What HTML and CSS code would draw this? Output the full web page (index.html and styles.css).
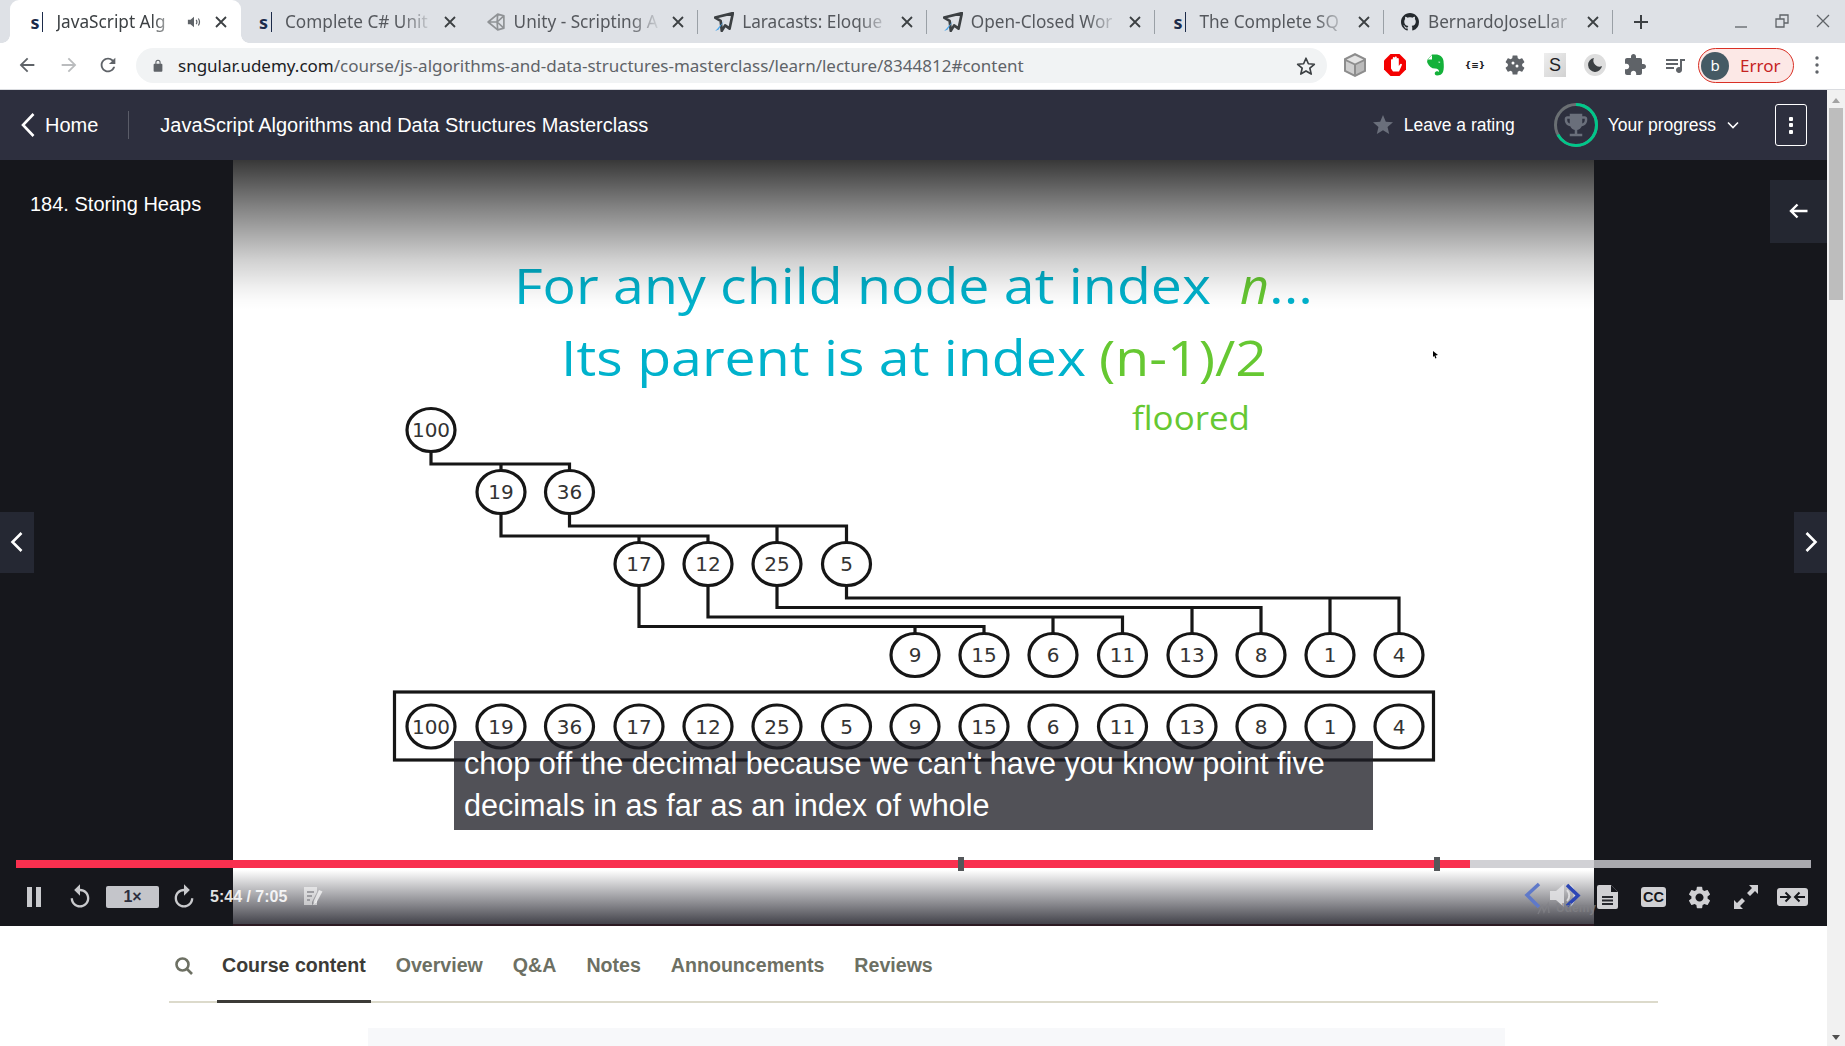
FILE: index.html
```html
<!DOCTYPE html>
<html lang="en">
<head>
<meta charset="utf-8">
<title>JavaScript Algorithms and Data Structures Masterclass</title>
<link rel="stylesheet" href="styles.css">
</head>
<body>
<div class="chrome">
  <div class="tabstrip">
    <div class="tab active">
      <span class="fav-s">s</span>
      <span class="tab-title">JavaScript Alg</span>
      <svg class="tab-audio" viewBox="0 0 16 16"><path d="M1 5.5h3L8 2v12L4 10.5H1z"/><path class="ln" d="M10.5 5.5c1 1.5 1 3.5 0 5M13 4c1.6 2.500 1.6 5.500 0 8"/></svg>
      <svg class="tab-x" viewBox="0 0 16 16"><path d="M3 3l10 10M13 3L3 13"/></svg>
    </div>
    <div class="tab">
      <span class="fav-s">s</span>
      <span class="tab-title">Complete C# Unit</span>
      <svg class="tab-x" viewBox="0 0 16 16"><path d="M3 3l10 10M13 3L3 13"/></svg>
    </div>
    <div class="tab sep">
      <svg class="fav" viewBox="0 0 16 16"><path class="unity" d="M9.5 1L15 2.5V13.500L9.500 15 1 8zM1 8h8M9.500 1L9 8l.5 7M9 8l6-5.500M9 8l6 5.500"/></svg>
      <span class="tab-title">Unity - Scripting A</span>
      <svg class="tab-x" viewBox="0 0 16 16"><path d="M3 3l10 10M13 3L3 13"/></svg>
    </div>
    <div class="tab sep">
      <svg class="fav fav-plane" viewBox="0 0 18 18"><path class="plane" d="M17 1L1 5l5 3 1 9 3-5 4 3z"/><path class="plane-blue" d="M9 8L3 15l-2 2 3-1z"/></svg>
      <span class="tab-title">Laracasts: Eloque</span>
      <svg class="tab-x" viewBox="0 0 16 16"><path d="M3 3l10 10M13 3L3 13"/></svg>
    </div>
    <div class="tab sep">
      <svg class="fav fav-plane" viewBox="0 0 18 18"><path class="plane" d="M17 1L1 5l5 3 1 9 3-5 4 3z"/><path class="plane-blue" d="M9 8L3 15l-2 2 3-1z"/></svg>
      <span class="tab-title">Open-Closed Wor</span>
      <svg class="tab-x" viewBox="0 0 16 16"><path d="M3 3l10 10M13 3L3 13"/></svg>
    </div>
    <div class="tab sep">
      <span class="fav-s">s</span>
      <span class="tab-title">The Complete SQ</span>
      <svg class="tab-x" viewBox="0 0 16 16"><path d="M3 3l10 10M13 3L3 13"/></svg>
    </div>
    <div class="tab sep">
      <svg class="fav gh" viewBox="0 0 16 16"><path d="M8 0C3.58 0 0 3.58 0 8c0 3.54 2.29 6.53 5.47 7.59.4.07.55-.17.55-.38 0-.19-.01-.82-.01-1.49-2.01.37-2.53-.49-2.69-.94-.09-.23-.48-.94-.82-1.13-.28-.15-.68-.52-.01-.53.63-.01 1.08.58 1.23.82.72 1.21 1.87.87 2.33.66.07-.52.28-.87.51-1.07-1.78-.2-3.64-.89-3.64-3.95 0-.87.31-1.59.82-2.15-.08-.2-.36-1.02.08-2.12 0 0 .67-.21 2.2.82.64-.18 1.32-.27 2-.27.68 0 1.36.09 2 .27 1.53-1.04 2.2-.82 2.2-.82.44 1.1.16 1.92.08 2.12.51.56.82 1.27.82 2.15 0 3.07-1.87 3.75-3.65 3.95.29.25.54.73.54 1.48 0 1.07-.01 1.93-.01 2.2 0 .21.15.46.55.38A8.013 8.013 0 0 0 16 8c0-4.42-3.58-8-8-8z"/></svg>
      <span class="tab-title">BernardoJoseLlar</span>
      <svg class="tab-x" viewBox="0 0 16 16"><path d="M3 3l10 10M13 3L3 13"/></svg>
    </div>
    <svg class="new-tab" viewBox="0 0 16 16"><path d="M8 1v14M1 8h14"/></svg>
    <div class="win-controls">
      <svg viewBox="0 0 16 16"><path d="M2 14h12"/></svg>
      <svg viewBox="0 0 16 16"><path d="M2 6h8v8H2zM6 6V2h8v8h-4"/></svg>
      <svg viewBox="0 0 16 16"><path d="M2 2l12 12M14 2L2 14"/></svg>
    </div>
  </div>
  <div class="toolbar">
    <svg class="nav-ic" viewBox="0 0 24 24"><path d="M20 11H7.83l5.59-5.59L12 4l-8 8 8 8 1.41-1.41L7.83 13H20v-2z"/></svg>
    <svg class="nav-ic dim flip" viewBox="0 0 24 24"><path d="M20 11H7.83l5.59-5.59L12 4l-8 8 8 8 1.41-1.41L7.83 13H20v-2z"/></svg>
    <svg class="nav-ic" viewBox="0 0 24 24"><path d="M17.65 6.35A7.958 7.958 0 0 0 12 4c-4.42 0-7.99 3.58-7.99 8s3.57 8 7.99 8c3.73 0 6.84-2.55 7.73-6h-2.08A5.99 5.99 0 0 1 12 18c-3.31 0-6-2.69-6-6s2.69-6 6-6c1.66 0 3.14.69 4.22 1.78L13 11h7V4l-2.35 2.35z"/></svg>
    <div class="omnibox">
      <svg class="lock" viewBox="0 0 16 16"><path d="M12 6h-1V4.5a3 3 0 0 0-6 0V6H4a1 1 0 0 0-1 1v7a1 1 0 0 0 1 1h8a1 1 0 0 0 1-1V7a1 1 0 0 0-1-1zM6.2 6V4.5a1.8 1.8 0 0 1 3.6 0V6z"/></svg>
      <span class="url"><b>sngular.udemy.com</b>/course/js-algorithms-and-data-structures-masterclass/learn/lecture/8344812#content</span>
      <svg class="omni-star" viewBox="0 0 24 24"><path d="M12 3.5l2.6 6 6.5.6-4.9 4.3 1.5 6.4-5.7-3.4-5.7 3.4 1.5-6.4-4.9-4.3 6.5-.6z"/></svg>
    </div>
    <div class="ext-row">
      <svg class="ext" viewBox="0 0 24 24"><path fill="#8d8d8d" d="M12 0l11 5.500v13L12 24 1 18.500v-13z"/><path fill="#e4e4e4" d="M12 2.600l8.400 3.900-8.400 3.900-8.400-3.900z"/><path fill="#cfcfcf" d="M3 8.200l8 3.700v9.300l-8-4z"/><path fill="#bbbbbb" d="M21 8.200l-8 3.700v9.300l8-4z"/></svg>
      <svg class="ext" viewBox="0 0 24 24"><path fill="#f40000" d="M7.5 1h9L23 7.5v9L16.5 23h-9L1 16.500v-9z"/><path fill="#fff" d="M8 11V7a1 1 0 0 1 1.800-.5V5a1 1 0 0 1 2 0V4.500a1 1 0 0 1 2 0V6a1 1 0 0 1 2 0v7l1.500-2a1 1 0 0 1 1.500 1.300L16 18.500H10L8 15.500z"/></svg>
      <svg class="ext" viewBox="0 0 24 24"><path fill="#14b13a" d="M4.500 6.500L9 1.500h3.500c4.500 0 7.500 2.500 8 6.500.5 5 .5 8-.5 11-.8 2.500-3.500 3.500-6 3.500-2.500 0-3-3-1-4 1-.4 2.500 0 3 .5 0-2-1-3.500-4-3.500-3.500 0-6-2-7.500-5.500-.5-1.200-.5-2.100 0-3z"/><path fill="#fff" d="M9 2v4.500H4.800z"/><path fill="#fff" d="M15.500 8.500l2 .5-1.700.9z"/></svg>
      <span class="ext ext-braces">{≡}</span>
      <svg class="ext" viewBox="0 0 24 24"><path fill="#5f6368" d="M19.14 12.94c.04-.3.06-.61.06-.94 0-.32-.02-.64-.07-.94l2.03-1.58a.49.49 0 0 0 .12-.61l-1.92-3.32a.488.488 0 0 0-.59-.22l-2.39.96c-.5-.38-1.03-.7-1.62-.94l-.36-2.54a.484.484 0 0 0-.48-.41h-3.84c-.24 0-.43.17-.47.41l-.36 2.54c-.59.24-1.13.57-1.62.94l-2.39-.96c-.22-.08-.47 0-.59.22L2.74 8.87c-.12.21-.08.47.12.61l2.03 1.58c-.05.3-.09.63-.09.94s.02.64.07.94l-2.03 1.58a.49.49 0 0 0-.12.61l1.92 3.32c.12.22.37.29.59.22l2.39-.96c.5.38 1.03.7 1.62.94l.36 2.54c.05.24.24.41.48.41h3.84c.24 0 .44-.17.47-.41l.36-2.54c.59-.24 1.13-.56 1.62-.94l2.39.96c.22.08.47 0 .59-.22l1.92-3.32c.12-.22.07-.47-.12-.61l-2.01-1.58z"/><circle cx="10" cy="10" r="1.5" fill="#fff"/><circle cx="14" cy="13" r="1.5" fill="#fff"/></svg>
      <span class="ext ext-s">S</span>
      <svg class="ext" viewBox="0 0 24 24"><circle cx="12" cy="12" r="11" fill="#dedede"/><path fill="#3c4043" d="M11 5a7 7 0 1 0 8 8 6 6 0 0 1-8-8z"/></svg>
      <svg class="ext" viewBox="0 0 24 24"><path fill="#5f6368" d="M20.5 11H19V7c0-1.1-.9-2-2-2h-4V3.5C13 2.12 11.88 1 10.5 1S8 2.12 8 3.5V5H4c-1.1 0-1.99.9-1.99 2v3.8H3.5c1.49 0 2.7 1.21 2.7 2.7s-1.21 2.7-2.7 2.7H2V20c0 1.1.9 2 2 2h3.8v-1.5c0-1.49 1.21-2.7 2.7-2.7 1.49 0 2.7 1.21 2.7 2.7V22H17c1.1 0 2-.9 2-2v-4h1.5c1.38 0 2.5-1.12 2.5-2.5S21.88 11 20.5 11z"/></svg>
      <svg class="ext" viewBox="0 0 24 24"><path fill="#5f6368" d="M15 6H3v2h12V6zm0 4H3v2h12v-2zM3 16h8v-2H3v2zM17 6v8.18c-.31-.11-.65-.18-1-.18-1.66 0-3 1.34-3 3s1.34 3 3 3 3-1.34 3-3V8h3V6h-5z"/></svg>
    </div>
    <div class="profile-pill"><span class="avatar">b</span><span class="pill-text">Error</span></div>
    <svg class="menu-dots" viewBox="0 0 4 18"><circle cx="2" cy="2" r="1.7"/><circle cx="2" cy="9" r="1.7"/><circle cx="2" cy="16" r="1.7"/></svg>
  </div>
</div>

<div class="page">
  <div class="content">
    <header class="course-header">
      <svg class="home-chev" viewBox="0 0 16 26"><path d="M13.5 2L3 13l10.5 11"/></svg>
      <span class="home">Home</span>
      <span class="divider"></span>
      <span class="course-title">JavaScript Algorithms and Data Structures Masterclass</span>
      <div class="header-right">
        <svg class="rate-star" viewBox="0 0 24 24"><path d="M12 17.27L18.18 21l-1.64-7.03L22 9.24l-7.19-.61L12 2 9.19 8.63 2 9.24l5.46 4.73L5.82 21z"/></svg>
        <span class="rate-text">Leave a rating</span>
        <svg class="ring" viewBox="0 0 44 44">
          <circle class="ring-base" cx="22" cy="22" r="20.5"/>
          <circle class="ring-fill" cx="22" cy="22" r="20.5" transform="rotate(-90 22 22)"/>
          <path class="trophy" transform="translate(7 7) scale(1.25)" d="M19 5h-2V3H7v2H5c-1.1 0-2 .9-2 2v1c0 2.55 1.92 4.63 4.39 4.94.63 1.5 1.98 2.63 3.61 2.96V19H7v2h10v-2h-4v-3.1c1.63-.33 2.98-1.46 3.61-2.96C19.08 12.63 21 10.55 21 8V7c0-1.1-.9-2-2-2zM5 8V7h2v3.82C5.84 10.4 5 9.3 5 8zm14 0c0 1.3-.84 2.4-2 2.82V7h2v1z"/>
        </svg>
        <span class="progress-text">Your progress</span>
        <svg class="prog-chev" viewBox="0 0 12 8"><path d="M1 1.5l5 5 5-5"/></svg>
        <div class="kebab"><i></i><i></i><i></i></div>
      </div>
    </header>

    <section class="player">
      <aside class="side side-left"><div class="lecture-name">184. Storing Heaps</div></aside>
      <div class="slide">
        <svg class="slide-art" viewBox="233 160 1361 766">
          <text class="t-blue t-big" x="514" y="304" textLength="697" lengthAdjust="spacingAndGlyphs">For any child node at index</text>
          <text class="t-green t-big t-it" x="1240" y="304" textLength="29" lengthAdjust="spacingAndGlyphs">n</text>
          <text class="t-blue t-big" x="1269" y="304" textLength="44" lengthAdjust="spacingAndGlyphs">...</text>
          <text class="t-blue t-big" x="561" y="376" textLength="525" lengthAdjust="spacingAndGlyphs">Its parent is at index</text>
          <text class="t-green t-big" x="1099" y="376" textLength="168" lengthAdjust="spacingAndGlyphs">(n-1)/2</text>
          <text class="t-green t-small" x="1132" y="430" textLength="118" lengthAdjust="spacingAndGlyphs">floored</text>

          <path class="wire" d="M431 450V464H569.5V472M501 464V472"/>
          <path class="wire" d="M569.5 512V526H846.5V544M777 526V544"/>
          <path class="wire" d="M501 512V536H708V544M639 536V544"/>
          <path class="wire" d="M846.5 584V598H1399V635M1330 598V635"/>
          <path class="wire" d="M777 584V607.5H1261V635M1192 607.5V635"/>
          <path class="wire" d="M708 584V617H1122.5V635M1053 617V635"/>
          <path class="wire" d="M639 584V626.5H984V635M915 626.5V635"/>
          <rect class="wire" x="394.5" y="692" width="1039" height="68"/>

          <g class="node" transform="translate(431 430)"><ellipse rx="24" ry="21.5"/><text>100</text></g>
          <g class="node" transform="translate(501 492)"><ellipse rx="24" ry="21.5"/><text>19</text></g>
          <g class="node" transform="translate(569.5 492)"><ellipse rx="24" ry="21.5"/><text>36</text></g>
          <g class="node" transform="translate(639 564)"><ellipse rx="24" ry="21.5"/><text>17</text></g>
          <g class="node" transform="translate(708 564)"><ellipse rx="24" ry="21.5"/><text>12</text></g>
          <g class="node" transform="translate(777 564)"><ellipse rx="24" ry="21.5"/><text>25</text></g>
          <g class="node" transform="translate(846.5 564)"><ellipse rx="24" ry="21.5"/><text>5</text></g>
          <g class="node" transform="translate(915 655)"><ellipse rx="24" ry="21.5"/><text>9</text></g>
          <g class="node" transform="translate(984 655)"><ellipse rx="24" ry="21.5"/><text>15</text></g>
          <g class="node" transform="translate(1053 655)"><ellipse rx="24" ry="21.5"/><text>6</text></g>
          <g class="node" transform="translate(1122.5 655)"><ellipse rx="24" ry="21.5"/><text>11</text></g>
          <g class="node" transform="translate(1192 655)"><ellipse rx="24" ry="21.5"/><text>13</text></g>
          <g class="node" transform="translate(1261 655)"><ellipse rx="24" ry="21.5"/><text>8</text></g>
          <g class="node" transform="translate(1330 655)"><ellipse rx="24" ry="21.5"/><text>1</text></g>
          <g class="node" transform="translate(1399 655)"><ellipse rx="24" ry="21.5"/><text>4</text></g>

          <g class="node" transform="translate(431 726.5)"><ellipse rx="24" ry="21.5"/><text>100</text></g>
          <g class="node" transform="translate(501 726.5)"><ellipse rx="24" ry="21.5"/><text>19</text></g>
          <g class="node" transform="translate(569.5 726.5)"><ellipse rx="24" ry="21.5"/><text>36</text></g>
          <g class="node" transform="translate(639 726.5)"><ellipse rx="24" ry="21.5"/><text>17</text></g>
          <g class="node" transform="translate(708 726.5)"><ellipse rx="24" ry="21.5"/><text>12</text></g>
          <g class="node" transform="translate(777 726.5)"><ellipse rx="24" ry="21.5"/><text>25</text></g>
          <g class="node" transform="translate(846.5 726.5)"><ellipse rx="24" ry="21.5"/><text>5</text></g>
          <g class="node" transform="translate(915 726.5)"><ellipse rx="24" ry="21.5"/><text>9</text></g>
          <g class="node" transform="translate(984 726.5)"><ellipse rx="24" ry="21.5"/><text>15</text></g>
          <g class="node" transform="translate(1053 726.5)"><ellipse rx="24" ry="21.5"/><text>6</text></g>
          <g class="node" transform="translate(1122.5 726.5)"><ellipse rx="24" ry="21.5"/><text>11</text></g>
          <g class="node" transform="translate(1192 726.5)"><ellipse rx="24" ry="21.5"/><text>13</text></g>
          <g class="node" transform="translate(1261 726.5)"><ellipse rx="24" ry="21.5"/><text>8</text></g>
          <g class="node" transform="translate(1330 726.5)"><ellipse rx="24" ry="21.5"/><text>1</text></g>
          <g class="node" transform="translate(1399 726.5)"><ellipse rx="24" ry="21.5"/><text>4</text></g>

          <path class="cursor" d="M1433 351l5 4-2.5.4 1 2.6-1.2.4-1-2.6-1.3 1.2z"/>
        </svg>
      </div>
      <aside class="side side-right"></aside>

      <div class="caption">chop off the decimal because we can't have you know point five<br>decimals in as far as an index of whole</div>

      <button class="panel-btn" aria-label="Collapse sidebar"><svg viewBox="0 0 20 16"><path d="M18.5 8H2M8.5 1.5L2 8l6.5 6.5"/></svg></button>
      <button class="nav-arrow nav-prev" aria-label="Previous"><svg viewBox="0 0 14 22"><path d="M11.5 2L2.5 11l9 9"/></svg></button>
      <button class="nav-arrow nav-next" aria-label="Next"><svg viewBox="0 0 14 22"><path d="M2.5 2l9 9-9 9"/></svg></button>

      <div class="controls">
        <div class="progress">
          <div class="progress-fill"></div>
          <span class="mark mark-a"></span>
          <span class="mark mark-b"></span>
        </div>
        <div class="ctrl-row">
          <div class="ctrl-left">
            <svg class="ci ci-pause" viewBox="0 0 14 20"><path d="M0 0h5v20H0zM9 0h5v20H9z"/></svg>
            <svg class="ci ci-replay" viewBox="0 0 24 24"><path d="M12 5V1L7 6l5 5V7c3.31 0 6 2.69 6 6s-2.69 6-6 6-6-2.69-6-6H4c0 4.42 3.58 8 8 8s8-3.58 8-8-3.58-8-8-8z"/></svg>
            <span class="speed">1×</span>
            <svg class="ci ci-replay flip" viewBox="0 0 24 24"><path d="M12 5V1L7 6l5 5V7c3.31 0 6 2.69 6 6s-2.69 6-6 6-6-2.69-6-6H4c0 4.42 3.58 8 8 8s8-3.58 8-8-3.58-8-8-8z"/></svg>
            <span class="time">5:44 / 7:05</span>
            <svg class="ci-note" viewBox="0 0 24 24"><path d="M3 2h13v5l-5 10v3l3-2 2-4v6H3z"/><path class="note-pen" d="M18 5l3.5 1.5-6 11-3 2 .2-3.5z"/><path class="note-lines" d="M6 7h7M6 11h5M6 15h3"/></svg>
          </div>
          <div class="ctrl-right">
            <svg class="vol" viewBox="0 0 66 32">
              <path class="vol-chev-a" d="M15 3L3 14l12 12"/>
              <path class="vol-speaker" d="M26 10h6l8-7v23l-8-7h-6z"/>
              <path class="vol-wave" d="M43 9c3 3 3 8 0 11M46 4c6 6 6 15 0 21"/>
              <path class="vol-chev-b" d="M43 4l11 10.5L43 25"/>
              <text class="watermark" x="32" y="31">Udemy</text>
              <path class="vol-mark" d="M14 33l4-8 2 6 4-8 1 9"/>
            </svg>
            <svg class="ci-doc" viewBox="0 0 21 24"><path class="doc-body" d="M2 0h12l7 7v15a2 2 0 0 1-2 2H2a2 2 0 0 1-2-2V2a2 2 0 0 1 2-2z"/><path class="doc-fold" d="M14 0v7h7"/><path class="doc-lines" d="M5 12h11M5 15.5h11M5 19h11"/></svg>
            <span class="cc">CC</span>
            <svg class="ci-gear" viewBox="0 0 24 24"><path d="M19.14 12.94c.04-.3.06-.61.06-.94 0-.32-.02-.64-.07-.94l2.03-1.58a.49.49 0 0 0 .12-.61l-1.92-3.32a.488.488 0 0 0-.59-.22l-2.39.96c-.5-.38-1.03-.7-1.62-.94l-.36-2.54a.484.484 0 0 0-.48-.41h-3.84c-.24 0-.43.17-.47.41l-.36 2.54c-.59.24-1.13.57-1.62.94l-2.39-.96c-.22-.08-.47 0-.59.22L2.74 8.87c-.12.21-.08.47.12.61l2.03 1.58c-.05.3-.09.63-.09.94s.02.64.07.94l-2.03 1.58a.49.49 0 0 0-.12.61l1.92 3.32c.12.22.37.29.59.22l2.39-.96c.5.38 1.03.7 1.62.94l.36 2.54c.05.24.24.41.48.41h3.84c.24 0 .44-.17.47-.41l.36-2.54c.59-.24 1.13-.56 1.62-.94l2.39.96c.22.08.47 0 .59-.22l1.92-3.32c.12-.22.07-.47-.12-.61l-2.01-1.58zM12 15.6c-1.98 0-3.6-1.62-3.6-3.6s1.62-3.6 3.6-3.6 3.6 1.62 3.6 3.6-1.62 3.6-3.6 3.6z"/></svg>
            <svg class="ci-expand" viewBox="0 0 26 26"><path d="M25 1v9l-3-3-5 5-3-3 5-5-3-3zM1 25v-9l3 3 5-5 3 3-5 5 3 3z"/></svg>
            <svg class="ci-theater" viewBox="0 0 31 18"><rect class="th-body" width="31" height="18" rx="3"/><path class="th-arrows" d="M3 9h9M8.5 4.5L13 9l-4.5 4.5M28 9h-9M22.5 4.5L18 9l4.5 4.5"/></svg>
          </div>
        </div>
      </div>
    </section>

    <nav class="course-nav">
      <svg class="nav-search" viewBox="0 0 20 20"><circle cx="8.5" cy="8.5" r="6"/><path d="M13 13l5 5"/></svg>
      <a class="nav-item current">Course content</a>
      <a class="nav-item">Overview</a>
      <a class="nav-item">Q&amp;A</a>
      <a class="nav-item">Notes</a>
      <a class="nav-item">Announcements</a>
      <a class="nav-item">Reviews</a>
    </nav>
    <div class="below"></div>
  </div>
  <div class="scrollbar">
    <span class="sb-up"></span>
    <span class="sb-thumb"></span>
    <span class="sb-down"></span>
  </div>
</div>
</body>
</html>
```

FILE: styles.css
```css
* { box-sizing: border-box; }
html, body { margin: 0; padding: 0; }
body {
  width: 1845px;
  height: 1046px;
  overflow: hidden;
  background: #fff;
  font-family: "Liberation Sans", Arial, sans-serif;
}
svg { display: block; flex: none; }
.flip { transform: scaleX(-1); }

/* browser chrome */
.chrome { height: 90px; }
.tabstrip {
  height: 43px;
  background: #dee1e6;
  display: flex;
  padding-left: 12.4px;
  font-family: "Noto Sans", sans-serif;
}
.tab {
  position: relative;
  flex: 0 0 228.6px;
  min-width: 0;
  height: 43px;
  display: flex;
  align-items: center;
  padding: 0 12px 0 18px;
  color: #55585d;
  font-size: 17.2px;
}
.tab.sep::after {
  content: "";
  position: absolute;
  right: 0;
  top: 10px;
  width: 1px;
  height: 24px;
  background: #9aa0a6;
}
.tab.active {
  background: #fff;
  border-radius: 9px 9px 0 0;
  color: #3c4043;
  margin-left: -2.4px;
  padding-left: 20.4px;
  flex-basis: 231px;
}
.tab.active::before, .tab.active::after {
  content: "";
  position: absolute;
  bottom: 0;
  width: 8px;
  height: 8px;
}
.tab.active::before {
  left: -8px;
  background: radial-gradient(circle at 0 0, #dee1e6 7.5px, #fff 8px);
}
.tab.active::after {
  right: -8px;
  background: radial-gradient(circle at 100% 0, #dee1e6 7.5px, #fff 8px);
}
.fav-s {
  flex: none;
  width: 13px;
  margin-right: 13px;
  font: bold 18px/20px "Noto Sans", sans-serif;
  color: #1c2b4a;
  border-right: 1px solid #1c2b4a;
}
.fav { width: 18px; height: 18px; margin-right: 9px; margin-left: -1px; }
.fav-plane { width: 20px; height: 20px; margin-left: -2px; margin-right: 8px; }
.gh { fill: #24292e; }
.unity { fill: none; stroke: #8f9295; stroke-width: 1.5; stroke-linejoin: round; }
.plane { fill: none; stroke: #3c4043; stroke-width: 2.4; stroke-linejoin: round; }
.plane-blue { fill: #4aa5ea; }
.tab-title {
  flex: 1;
  min-width: 0;
  overflow: hidden;
  white-space: nowrap;
  -webkit-mask-image: linear-gradient(to right, #000 78%, transparent 100%);
  mask-image: linear-gradient(to right, #000 78%, transparent 100%);
}
.tab-audio { width: 14px; height: 14px; fill: #5f6368; margin: 0 4px 0 8px; }
.tab-audio .ln { fill: none; stroke: #5f6368; stroke-width: 1.4; }
.tab-x { width: 16px; height: 16px; fill: none; stroke: #3c4043; stroke-width: 1.8; margin-left: 8px; }
.new-tab { width: 16px; height: 16px; margin: 14px 0 0 20px; fill: none; stroke: #3c4043; stroke-width: 2; }
.win-controls { margin-left: auto; display: flex; gap: 25px; padding: 13px 14px 0 0; }
.win-controls svg { width: 16px; height: 16px; fill: none; stroke: #5f6368; stroke-width: 1.3; }

.toolbar {
  height: 47px;
  background: #fff;
  border-bottom: 1px solid #dadce0;
  display: flex;
  align-items: flex-start;
  padding: 5px 0 0 16px;
}
.nav-ic { width: 22px; height: 22px; margin: 6px 17px 0 0; fill: #5f6368; }
.nav-ic:first-child { margin-right: 20px; }
.nav-ic.dim { fill: #babcbe; }
.omnibox {
  width: 1191px;
  height: 35px;
  background: #f1f3f4;
  border-radius: 18px;
  display: flex;
  align-items: center;
  padding: 0 10px 0 15px;
  font-family: "Noto Sans", sans-serif;
}
.lock { width: 14px; height: 15px; fill: #5f6368; margin-right: 13px; }
.url { font-size: 17px; color: #5f6368; white-space: nowrap; }
.url b { font-weight: 400; color: #202124; }
.omni-star { width: 22px; height: 22px; margin-left: auto; fill: none; stroke: #3c4043; stroke-width: 1.8; stroke-linejoin: round; }
.ext-row { display: flex; margin-left: 8px; width: 360px; }
.ext-row .ext { width: 40px; height: 24px; margin-top: 5px; }
.ext-braces { font: bold 9px/24px "DejaVu Sans", sans-serif; color: #202124; text-align: center; }
.ext-s {
  font: 18px/24px "Liberation Sans", sans-serif;
  color: #202124;
  text-align: center;
  background: linear-gradient(135deg, #eeeeee, #d2d2d2) center / 22px 24px no-repeat;
}
.profile-pill {
  width: 96px;
  height: 35px;
  margin-left: 3px;
  border: 1.5px solid #d93025;
  border-radius: 18px;
  background: #fce8e6;
  display: flex;
  align-items: center;
  padding-left: 2px;
  font-family: "Noto Sans", sans-serif;
}
.avatar {
  width: 28px;
  height: 28px;
  border-radius: 50%;
  background: #455a64;
  color: #fff;
  font-size: 15px;
  line-height: 27px;
  text-align: center;
}
.pill-text { margin-left: 11px; font-size: 17px; color: #c5221f; }
.menu-dots { width: 4px; height: 18px; margin: 8px 0 0 21px; fill: #5f6368; }

/* page */
.page { display: flex; height: 956px; }
.content { width: 1827px; height: 956px; overflow: hidden; }
.course-header {
  height: 70px;
  background: #2d2f3e;
  color: #fff;
  display: flex;
  align-items: center;
  padding-left: 20px;
}
.home-chev { width: 16px; height: 26px; fill: none; stroke: #fff; stroke-width: 2.6; }
.home { margin-left: 9px; font-size: 20px; }
.divider { width: 1px; height: 28px; margin: 0 31px 0 30px; background: #5a5c68; }
.course-title { font-size: 20px; }
.header-right { margin-left: auto; display: flex; align-items: center; padding-right: 20px; }
.rate-star { width: 24px; height: 24px; fill: #6a6f7b; }
.rate-text { margin-left: 9px; font-size: 17.5px; }
.ring { width: 44px; height: 44px; margin-left: 39px; fill: none; stroke-width: 3; }
.ring-base { stroke: #6a6f73; }
.ring-fill { stroke: #00c78a; stroke-dasharray: 86 129; }
.trophy { fill: #6a6f7b; stroke: none; }
.progress-text { margin-left: 10px; font-size: 17.5px; }
.prog-chev { width: 12px; height: 8px; margin-left: 11px; fill: none; stroke: #fff; stroke-width: 1.6; }
.kebab {
  width: 32px;
  height: 42px;
  margin-left: 36px;
  border: 1px solid #fff;
  border-radius: 3px;
  display: flex;
  flex-direction: column;
  align-items: center;
  justify-content: center;
  gap: 2.5px;
}
.kebab i { width: 4px; height: 4px; background: #fff; border-radius: 1px; }

/* player */
.player {
  position: relative;
  height: 766px;
  display: grid;
  grid-template-columns: 233px 1361px 233px;
  background: #16171c;
}
.side { background: #16171c; }
.lecture-name { padding: 30px 0 0 30px; font-size: 20px; line-height: 28px; color: #fff; }
.slide { position: relative; background: #fff; overflow: hidden; }
.slide::before {
  content: "";
  position: absolute;
  left: 0; right: 0; top: 0;
  height: 150px;
  background: linear-gradient(rgba(0, 0, 0, .78) 0%, rgba(0, 0, 0, .5) 30%, rgba(0, 0, 0, .3) 53%, rgba(0, 0, 0, .18) 67%, rgba(0, 0, 0, .06) 85%, rgba(0, 0, 0, .015) 94%, rgba(0, 0, 0, 0) 100%);
  z-index: 1;
}
.slide::after {
  content: "";
  position: absolute;
  left: 0; right: 0; bottom: 0;
  height: 54px;
  background: linear-gradient(rgba(20, 20, 30, 0), rgba(20, 20, 30, .8));
  border-bottom: 2px solid #2b1a22;
}
.slide-art { width: 1361px; height: 766px; }
.t-big { font-family: "Open Sans", sans-serif; font-size: 50px; }
.t-small { font-family: "Open Sans", sans-serif; font-size: 32px; }
.t-it { font-style: italic; }
.t-blue { fill: #00b2cc; }
.t-green { fill: #66c832; }
.wire { fill: none; stroke: #161616; stroke-width: 3.2; }
.node ellipse { fill: #fff; stroke: #161616; stroke-width: 3.2; }
.node text {
  font-family: "DejaVu Sans", sans-serif;
  font-size: 20px;
  fill: #333;
  text-anchor: middle;
  transform: translateY(7px);
}
.cursor { fill: #000; }

.caption {
  position: absolute;
  left: 454px;
  top: 581px;
  width: 919px;
  height: 89px;
  padding: 1px 10px 0;
  background: rgba(28, 29, 36, .77);
  color: #fff;
  font-size: 30.6px;
  line-height: 42px;
  white-space: nowrap;
}
button { padding: 0; border: 0; }
.panel-btn {
  position: absolute;
  left: 1770px;
  top: 20px;
  width: 57px;
  height: 63px;
  padding-bottom: 2px;
  background: #242731;
  display: flex;
  align-items: center;
  justify-content: center;
}
.panel-btn svg { width: 20px; height: 16px; fill: none; stroke: #fff; stroke-width: 2.4; }
.nav-arrow {
  position: absolute;
  top: 352px;
  width: 34px;
  height: 61px;
  padding-bottom: 2px;
  background: #252833;
  display: flex;
  align-items: center;
  justify-content: center;
}
.nav-arrow svg { width: 14px; height: 22px; fill: none; stroke: #fff; stroke-width: 2.6; }
.nav-prev { left: 0; }
.nav-next { left: 1794px; width: 33px; }

.controls { position: absolute; left: 0; right: 0; bottom: 0; height: 66px; }
.progress {
  position: relative;
  height: 8px;
  margin: 0 16px;
  background: rgba(200, 200, 204, .83);
}
.progress-fill { width: 1454px; height: 8px; background: #f9304f; }
.mark { position: absolute; top: -3px; width: 6px; height: 14px; background: #54575a; }
.mark-a { left: 942px; }
.mark-b { left: 1418px; }
.ctrl-row { display: flex; justify-content: space-between; align-items: center; height: 40px; margin-top: 9px; padding: 0 19px 0 27px; }
.ctrl-left, .ctrl-right { display: flex; align-items: center; }
.ci { fill: #c9cacd; }
.ci-pause { width: 14px; height: 20px; margin-right: 25px; }
.ci-replay { width: 28px; height: 28px; }
.speed {
  width: 53px;
  height: 22px;
  margin: 0 11px 0 12px;
  background: #c4c5ca;
  border-radius: 2px;
  color: #2d2f3e;
  font: bold 16px/22px "Liberation Sans", sans-serif;
  text-align: center;
}
.time { margin: 0 14px 0 12px; font-size: 16px; font-weight: 700; color: rgba(255, 255, 255, .88); white-space: nowrap; }
.ci-note { width: 24px; height: 24px; fill: rgba(255, 255, 255, .55); }
.note-pen { fill: rgba(255, 255, 255, .7); }
.note-lines { fill: none; stroke: #8a8b90; stroke-width: 1.5; }
.ctrl-right { gap: 20px; }
.vol { width: 66px; height: 32px; margin-right: -13px; overflow: visible; }
.vol-chev-a { fill: none; stroke: #5f79c9; stroke-width: 3.5; }
.vol-chev-b { fill: none; stroke: #2b45b5; stroke-width: 3.5; }
.vol-speaker { fill: #e4e4e6; opacity: .85; }
.vol-wave { fill: none; stroke: #e4e4e6; stroke-width: 2; opacity: .85; }
.watermark { font: bold 12px "Liberation Sans", sans-serif; fill: rgba(130, 130, 135, .75); }
.vol-mark { fill: none; stroke: rgba(130, 130, 135, .75); stroke-width: 1.5; }
.ci-doc { width: 21px; height: 24px; margin-right: 3px; }
.doc-body { fill: #d0d0d3; }
.doc-fold { fill: #16171c; }
.doc-lines { fill: none; stroke: #26272d; stroke-width: 2; }
.cc {
  width: 25px;
  height: 20px;
  background: #d0d0d3;
  border-radius: 3px;
  color: #16171c;
  font: bold 14.5px/20px "Liberation Sans", sans-serif;
  text-align: center;
}
.ci-gear { width: 27px; height: 27px; fill: #d0d0d3; }
.ci-expand { width: 26px; height: 26px; fill: #d0d0d3; }
.ci-theater { width: 31px; height: 18px; margin-left: -2px; }
.th-body { fill: #d0d0d3; }
.th-arrows { fill: none; stroke: #16171c; stroke-width: 2; }

/* tabs below the player */
.course-nav {
  width: 1489px;
  height: 77px;
  margin-left: 169px;
  border-bottom: 2px solid #dcdacb;
  display: flex;
  align-items: stretch;
  gap: 20px;
  padding-left: 5px;
}
.nav-search { width: 20px; height: 20px; margin: 30px 3px 0 0; fill: none; stroke: #6d7063; stroke-width: 2.6; }
.nav-item {
  padding: 0 5px;
  font-size: 19.6px;
  font-weight: 700;
  line-height: 78px;
  color: #6d7063;
  white-space: nowrap;
  height: 77px;
}
.nav-item.current { color: #3c3b37; border-bottom: 3px solid #3c3b37; }
.below { width: 1137px; height: 40px; margin: 25px 0 0 368px; background: #f7f8fa; }

.scrollbar {
  width: 18px;
  height: 956px;
  background: #f1f1f1;
  display: flex;
  flex-direction: column;
  align-items: center;
}
.sb-up, .sb-down { width: 0; height: 0; border-left: 4.5px solid transparent; border-right: 4.5px solid transparent; }
.sb-up { border-bottom: 5px solid #a3a3a3; margin-top: 8px; }
.sb-thumb { width: 14px; height: 192px; margin-top: 5px; background: #bdbdbd; }
.sb-down { border-top: 5px solid #505050; margin-top: auto; margin-bottom: 6px; }
```
